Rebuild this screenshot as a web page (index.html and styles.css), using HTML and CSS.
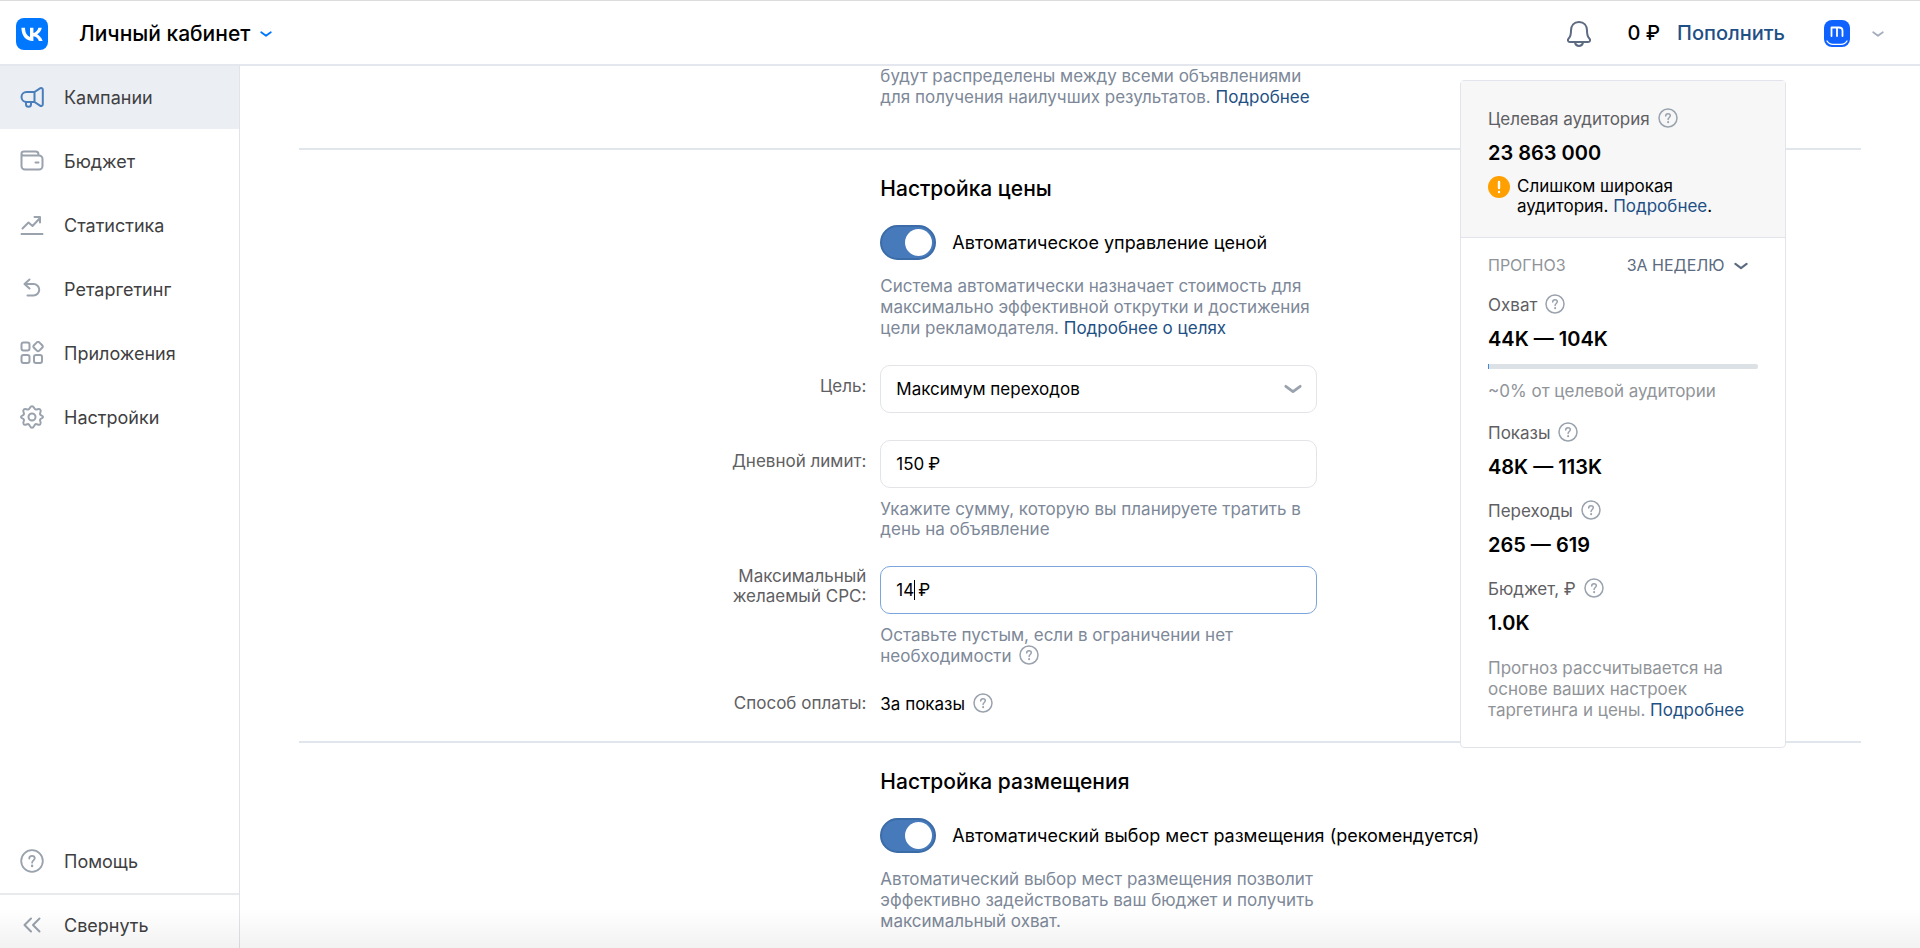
FILE: index.html
```html
<!DOCTYPE html>
<html lang="ru">
<head>
    <meta charset="UTF-8">
    <meta name="viewport" content="width=device-width, initial-scale=1.0">
    <title>Личный кабинет</title>
    <link rel="stylesheet" href="styles.css">
</head>
<body>

    <!-- shared icons -->
    <svg class="sprite" aria-hidden="true">
        <symbol id="icon-help" viewBox="0 0 20 20">
            <circle cx="10" cy="10" r="9"/>
            <path d="M7.7 8c0-1.4 1-2.3 2.3-2.3s2.3.9 2.3 2.1c0 1.6-2.2 1.8-2.2 3.6"/>
            <path d="M10.1 14v.2" stroke-width="2"/>
        </symbol>
        <symbol id="icon-chevron" viewBox="0 0 20 12">
            <path d="M2 3l8 6 8-6"/>
        </symbol>
    </svg>

    <header class="header">
        <a class="logo" href="#" aria-label="VK">
            <svg width="32" height="32" viewBox="0 0 32 32">
                <rect width="32" height="32" rx="8" fill="#0077ff"/>
                <path fill="#fff" d="M17 23C9.700 23 5.600 18 5.400 9.800H9c.1 6 2.800 8.600 5 9.100V9.800h3.400V15c2.100-.2 4.300-2.600 5-5.200h3.400c-.5 3.200-2.900 5.600-4.600 6.600 1.700.8 4.400 2.800 5.400 6.600h-3.700c-.8-2.500-2.800-4.500-5.500-4.700V23z"/>
            </svg>
        </a>
        <button class="cabinet" type="button">
            Личный кабинет
            <svg class="cabinet-arrow" width="12" height="8"><use href="#icon-chevron"/></svg>
        </button>
        <div class="header-right">
            <button class="bell" type="button" aria-label="Уведомления">
                <svg width="26" height="28" viewBox="0 0 26 28">
                    <path d="M13 2c-5 0-8 3.500-8 8.500 0 4.500-.6 6.200-2.200 7.800-1.600 1.700-1 3.700 1.200 3.700h18c2.200 0 2.800-2 1.200-3.700C21.600 16.700 21 15 21 10.500 21 5.500 18 2 13 2z"/>
                    <path d="M9 22.500c.5 2.300 2 3.500 4 3.500s3.500-1.200 4-3.500"/>
                </svg>
            </button>
            <span class="balance">0 ₽</span>
            <a class="topup" href="#">Пополнить</a>
            <button class="account" type="button" aria-label="Аккаунт">
                <svg width="26" height="27" viewBox="0 0 26 27">
                    <rect width="26" height="27" rx="8" fill="#0f62fe"/>
                    <path d="M7.500 16V7.500h7.500c2 0 3.500 1 3.500 3V16M13 16V8" fill="none" stroke="#fff" stroke-width="1.800"/>
                    <path d="M3 21c1.500 2.500 3.500 3.300 6 3.300h8c2.500 0 4.500-.8 6-3.300" fill="none" stroke="#fff" stroke-width="1.300"/>
                </svg>
                <svg class="account-arrow" width="12" height="8"><use href="#icon-chevron"/></svg>
            </button>
        </div>
    </header>

    <div class="layout">
        <nav class="sidebar">
            <a class="nav-item active" href="#">
                <svg viewBox="0 0 24 24">
                    <path d="M14.500 6H6.500a5 5 0 0 0 0 10h8zM14.500 6l5.500-3.700c1.200-.8 2.800 0 2.800 1.500v14.400c0 1.500-1.600 2.300-2.800 1.500L14.500 16M6 16.500v1.800a2.500 2.500 0 0 0 5 0v-1.800"/>
                </svg>
                Кампании
            </a>
            <a class="nav-item" href="#">
                <svg viewBox="0 0 24 24">
                    <path d="M1.500 5v12a3.500 3.500 0 0 0 3.500 3.500h14a3.500 3.500 0 0 0 3.500-3.500v-7A3.500 3.500 0 0 0 19 6.500H3.500a2 2 0 0 1-2-2c0-1 1-2 2.500-2h11.500c2 0 3 1 3 3v1M15.500 13.500h3"/>
                </svg>
                Бюджет
            </a>
            <a class="nav-item" href="#">
                <svg viewBox="0 0 24 24">
                    <path d="M2.500 15.500l6-6 4 3.500 7.500-8M14.500 4H20v5.500M1.500 21h21"/>
                </svg>
                Статистика
            </a>
            <a class="nav-item" href="#">
                <svg viewBox="0 0 24 24">
                    <path d="M9.500 2.500L4.500 7l5 4.500M5 7h8.500a5.500 5.500 0 0 1 0 11.500H7.500"/>
                </svg>
                Ретаргетинг
            </a>
            <a class="nav-item" href="#">
                <svg viewBox="0 0 24 24">
                    <rect x="1.500" y="1.500" width="8" height="8" rx="2"/>
                    <rect x="1.500" y="14" width="8" height="8" rx="2"/>
                    <rect x="14" y="14" width="8" height="8" rx="2"/>
                    <rect x="14.300" y="1.700" width="7.500" height="7.500" rx="1.700" transform="rotate(45 18 5.500)"/>
                </svg>
                Приложения
            </a>
            <a class="nav-item" href="#">
                <svg viewBox="0 0 24 24">
                    <path d="M12 1.200c2.200 0 2 2.600 3.500 3.200s3.300-1.300 4.800.2-.8 3.300-.2 4.800 2.900 1.100 2.900 2.600-2.300 1.100-2.900 2.600 1.700 3.300.2 4.800-3.300-.8-4.800-.2-1.300 3.600-3.500 3.600-2-3-3.500-3.600-3.300 1.700-4.800.2.8-3.300.2-4.800S1 13.500 1 12s2.300-1.100 2.900-2.600-1.700-3.300-.2-4.800 3.300.4 4.800-.2 1.300-3.200 3.500-3.200z"/>
                    <circle cx="12" cy="12" r="3.500"/>
                </svg>
                Настройки
            </a>
            <a class="nav-item nav-help" href="#">
                <svg><use href="#icon-help"/></svg>
                Помощь
            </a>
            <button class="nav-item nav-collapse" type="button">
                <svg viewBox="0 0 24 24">
                    <path d="M11 5.500L4.500 12l6.500 6.500M19.500 5.500L13 12l6.500 6.500"/>
                </svg>
                Свернуть
            </button>
        </nav>

        <main class="content">
            <section class="section section-first">
                <p class="hint">будут распределены между всеми объявлениями для получения наилучших результатов. <a href="#">Подробнее</a></p>
            </section>

            <section class="section section-price">
                <h2>Настройка цены</h2>
                <label class="toggle">
                    <input type="checkbox" checked>
                    Автоматическое управление ценой
                </label>
                <p class="hint">Система автоматически назначает стоимость для максимально эффективной открутки и достижения цели рекламодателя. <a href="#">Подробнее о целях</a></p>

                <div class="row">
                    <label class="row-label" for="goal">Цель:</label>
                    <div class="field">
                        <select id="goal">
                            <option>Максимум переходов</option>
                        </select>
                        <svg class="field-arrow" width="18" height="12"><use href="#icon-chevron"/></svg>
                    </div>
                </div>

                <div class="row">
                    <label class="row-label" for="limit">Дневной лимит:</label>
                    <div>
                        <div class="field">
                            <input type="text" id="limit" size="3" value="150">
                            <span class="currency">₽</span>
                        </div>
                        <p class="hint hint-small">Укажите сумму, которую вы планируете тратить в день на объявление</p>
                    </div>
                </div>

                <div class="row">
                    <label class="row-label row-label-two" for="cpc">Максимальный желаемый CPC:</label>
                    <div>
                        <div class="field focused">
                            <input type="text" id="cpc" size="2" value="14">
                            <span class="caret"></span>
                            <span class="currency">₽</span>
                        </div>
                        <p class="hint hint-small">Оставьте пустым, если в ограничении нет необходимости <svg class="help"><use href="#icon-help"/></svg></p>
                    </div>
                </div>

                <div class="row row-pay">
                    <span class="row-label">Способ оплаты:</span>
                    <span>За показы <svg class="help"><use href="#icon-help"/></svg></span>
                </div>
            </section>

            <section class="section section-place">
                <h2>Настройка размещения</h2>
                <label class="toggle">
                    <input type="checkbox" checked>
                    Автоматический выбор мест размещения (рекомендуется)
                </label>
                <p class="hint">Автоматический выбор мест размещения позволит эффективно задействовать ваш бюджет и получить максимальный охват.</p>
            </section>
        </main>
    </div>

    <aside class="forecast">
        <div class="audience">
            <div class="metric-name">Целевая аудитория <svg class="help"><use href="#icon-help"/></svg></div>
            <div class="metric-value">23 863 000</div>
            <div class="warning">
                <svg width="22" height="22" viewBox="0 0 22 22">
                    <circle cx="11" cy="11" r="11" fill="#ffa000"/>
                    <path d="M11 6v6M11 15.900v.2" stroke="#fff" stroke-width="2.400"/>
                </svg>
                <p>Слишком широкая аудитория. <a href="#">Подробнее</a>.</p>
            </div>
        </div>
        <div class="stats">
            <div class="period">
                <span>ПРОГНОЗ</span>
                <button type="button">ЗА НЕДЕЛЮ <svg width="14" height="10"><use href="#icon-chevron"/></svg></button>
            </div>
            <div class="metric-name">Охват <svg class="help"><use href="#icon-help"/></svg></div>
            <div class="metric-value">44K — 104K</div>
            <div class="bar"><div class="bar-fill"></div></div>
            <p class="share">~0% от целевой аудитории</p>
            <div class="metric-name">Показы <svg class="help"><use href="#icon-help"/></svg></div>
            <div class="metric-value">48K — 113K</div>
            <div class="metric-name">Переходы <svg class="help"><use href="#icon-help"/></svg></div>
            <div class="metric-value">265 — 619</div>
            <div class="metric-name">Бюджет, ₽ <svg class="help"><use href="#icon-help"/></svg></div>
            <div class="metric-value">1.0K</div>
            <p class="note">Прогноз рассчитывается на основе ваших настроек таргетинга и цены. <a href="#">Подробнее</a></p>
        </div>
    </aside>

    <div class="fade"></div>

</body>
</html>
```
FILE: styles.css
```css
*{
    box-sizing: border-box;
}
body{
    margin: 0;
    height: 100vh;
    overflow: hidden;
    display: flex;
    flex-direction: column;
    background-color: #fff;
    color: #000;
    font-family: Inter, "Liberation Sans", sans-serif;
    font-size: 17px;
    line-height: 21px;
}
p, h2{
    margin: 0;
}
a{
    color: #1f5085;
    text-decoration: none;
}
button{
    padding: 0;
    border: none;
    background: none;
    font: inherit;
    color: inherit;
    cursor: pointer;
}
svg{
    fill: none;
    stroke-linecap: round;
    stroke-linejoin: round;
}
.sprite{
    display: none;
}

/* header */
.header{
    flex: none;
    height: 66px;
    padding: 2px 36px 0 16px;
    display: flex;
    align-items: center;
    border-top: 1px solid #dcdcdc;
    border-bottom: 2px solid #e4e8ee;
    font-size: 20px;
    font-weight: 500;
}
.logo{
    display: flex;
    margin-right: 31px;
}
.cabinet{
    display: flex;
    align-items: center;
    gap: 10px;
    font-size: 21px;
}
.cabinet-arrow{
    stroke: #0077ff;
    stroke-width: 3px;
}
.header-right{
    margin-left: auto;
    display: flex;
    align-items: center;
}
.bell{
    display: flex;
    margin-right: 35px;
    stroke: #5c6b80;
    stroke-width: 2px;
}
.balance{
    margin-right: 17px;
}
.topup{
    margin-right: 39px;
}
.account{
    display: flex;
    align-items: center;
    gap: 22px;
}
.account-arrow{
    stroke: #a5afbd;
    stroke-width: 3px;
}

/* sidebar */
.layout{
    flex: 1;
    min-height: 0;
    display: flex;
}
.sidebar{
    flex: none;
    width: 240px;
    display: flex;
    flex-direction: column;
    border-right: 1px solid #e1e3e9;
    font-size: 18px;
}
.nav-item{
    flex: none;
    height: 64px;
    padding: 0 20px;
    display: flex;
    align-items: center;
    gap: 20px;
    color: #3f3f42;
}
.nav-item svg{
    width: 24px;
    height: 24px;
    stroke: #99a2ad;
    stroke-width: 2px;
}
.nav-item.active{
    height: 63px;
    background-color: #ebeef3;
}
.nav-item.active svg{
    stroke: #4a7ebb;
}
.nav-help{
    margin-top: auto;
}
.nav-help svg{
    stroke-width: 1.5px;
}
.nav-collapse{
    height: 55px;
    padding-top: 7px;
    border-top: 2px solid #e9eaee;
}

/* form */
.content{
    flex: 1;
    overflow: hidden;
    padding: 0 59px;
}
.section{
    border-bottom: 2px solid #e1e6ed;
    padding-left: calc(36% + 19px);
}
.section-first{
    padding-bottom: 40px;
}
.section-price{
    padding-top: 27px;
    padding-bottom: 26px;
}
.section-place{
    padding-top: 27px;
    border-bottom: none;
}
h2{
    font-size: 21px;
    line-height: 24px;
    font-weight: 500;
}
.toggle{
    display: flex;
    align-items: center;
    gap: 16px;
    margin-top: 24px;
    font-size: 18px;
}
.toggle input{
    appearance: none;
    flex: none;
    display: flex;
    justify-content: flex-end;
    width: 56px;
    height: 35px;
    margin: 0;
    padding: 2px;
    border: 2px solid #3b6ca8;
    border-radius: 18px;
    background-color: #467abb;
}
.toggle input::before{
    content: "";
    width: 27px;
    height: 27px;
    border-radius: 50%;
    background-color: #fff;
}
.hint{
    width: 440px;
    color: #7d8898;
}
.toggle + .hint{
    margin-top: 16px;
}
.row{
    display: grid;
    grid-template-columns: 220px 437px;
    gap: 14px;
    margin-left: -234px;
    margin-top: 27px;
}
.hint + .row{
    margin-top: 26px;
}
.row-label{
    padding-top: 11px;
    text-align: right;
    color: #5f6063;
}
.row-label-two{
    padding: 0 0 0 60px;
    line-height: 20px;
}
.field{
    position: relative;
    height: 48px;
    display: flex;
    align-items: center;
    padding: 0 15px;
    border: 1px solid #e3e4e8;
    border-radius: 10px;
}
.field.focused{
    border-color: #7ba5dc;
}
.field input, .field select{
    appearance: none;
    border: none;
    outline: none;
    padding: 0;
    background: none;
    font: inherit;
    color: #000;
}
.field input{
    field-sizing: content;
}
.field select{
    width: 100%;
    height: 100%;
}
.field-arrow{
    position: absolute;
    right: 14px;
    stroke: #99a2ad;
    stroke-width: 3px;
    pointer-events: none;
}
.currency{
    margin-left: 4px;
}
.caret{
    width: 1px;
    height: 20px;
    background-color: #000;
}
.caret + .currency{
    margin-left: 3px;
}
.hint-small{
    margin-top: 11px;
    line-height: 20px;
}
.help{
    width: 20px;
    height: 20px;
    margin-left: 3px;
    vertical-align: -3px;
    stroke: #99a2ad;
    stroke-width: 1.5px;
}
.row-pay .row-label{
    padding-top: 0;
}

/* forecast card, floats over the form */
.forecast{
    position: fixed;
    top: 80px;
    right: 134px;
    width: 326px;
    border: 1px solid #e1e4ea;
    border-radius: 4px;
    background-color: #fff;
}
.audience{
    padding: 27px 27px 21px;
    border-bottom: 1px solid #e1e4ea;
    background-color: #f7f7f8;
}
.stats{
    padding: 17px 27px 26px;
}
.metric-name{
    color: #5f6063;
}
.metric-value{
    margin-top: 11px;
    font-size: 20px;
    line-height: 24px;
    font-weight: 600;
}
.metric-value + .metric-name{
    margin-top: 21px;
}
.warning{
    display: flex;
    gap: 7px;
    margin-top: 11px;
    line-height: 20px;
}
.warning svg{
    flex: none;
}
.period{
    display: flex;
    justify-content: space-between;
    margin-bottom: 18px;
    padding-right: 10px;
    font-size: 16px;
    color: #909499;
}
.period button{
    color: #5c6b80;
}
.period svg{
    margin-left: 5px;
    stroke: #5c6b80;
    stroke-width: 3px;
}
.bar{
    height: 5px;
    margin-top: 13px;
    border-radius: 2px;
    background-color: #dce1e6;
}
.bar-fill{
    width: 1px;
    height: 5px;
    background-color: #3f8ae0;
}
.share{
    margin: 12px 0 20px;
    color: #909499;
}
.note{
    margin-top: 23px;
    color: #909499;
}

.fade{
    position: fixed;
    left: 0;
    right: 0;
    bottom: 0;
    height: 40px;
    background: linear-gradient(rgba(0, 0, 0, 0), rgba(0, 0, 0, 0.05));
    pointer-events: none;
}
```
